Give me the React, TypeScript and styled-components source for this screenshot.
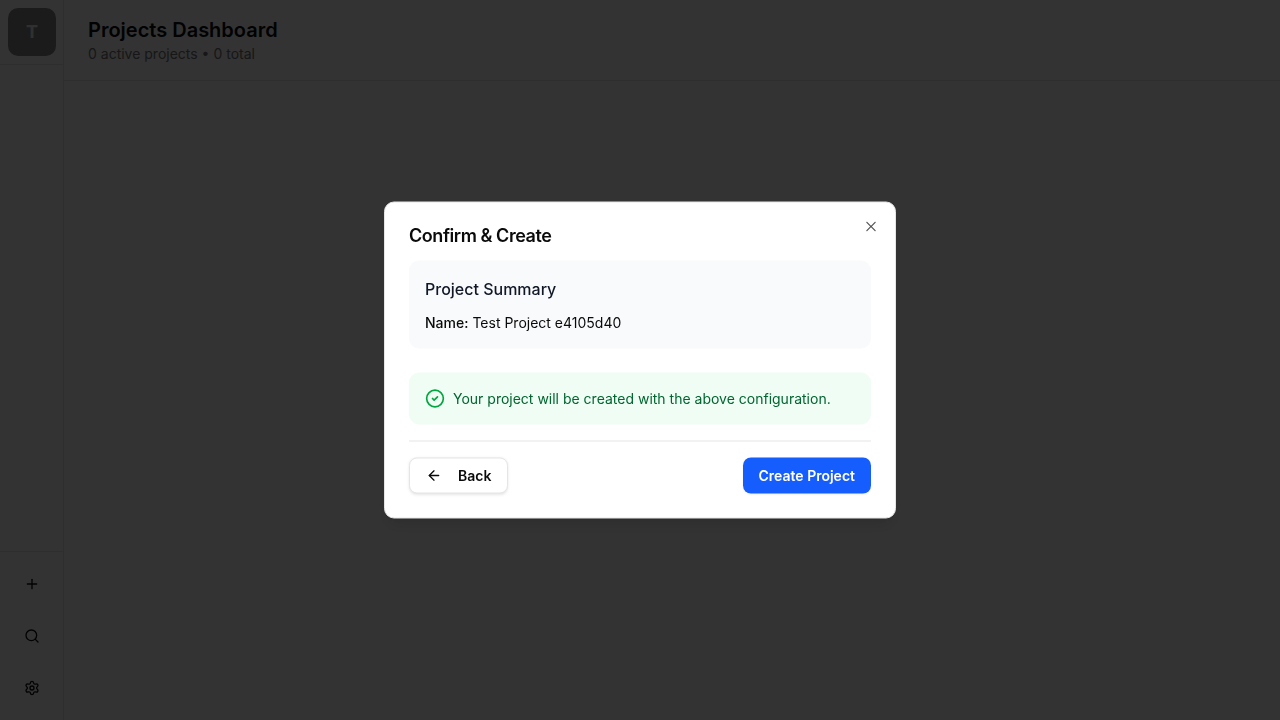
import React from "react";
import styled, { createGlobalStyle, css } from "styled-components";
import { ArrowLeft, CircleCheck, Plus, Search, Settings } from "lucide-react";

const GlobalStyle = createGlobalStyle`
  *, *::before, *::after { box-sizing: border-box; }
  body {
    margin: 0;
    background: #ffffff;
    color: #0a0a0a;
    font-family: Inter, "Liberation Sans", sans-serif;
    font-size: 14px;
    line-height: 20px;
  }
  h1, h2, h3, p { margin: 0; }
  button { font: inherit; color: inherit; cursor: pointer; }
`;

const Shell = styled.div`
  display: flex;
  min-height: 100vh;
`;

const Sidebar = styled.nav`
  display: flex;
  flex-direction: column;
  justify-content: space-between;
  width: 64px;
  flex-shrink: 0;
  border-right: 1px solid #e5e5e5;
`;

const SidebarTop = styled.div`
  padding: 8px 7px 8px 8px;
  border-bottom: 1px solid #e5e5e5;
`;

const Workspace = styled.button`
  display: flex;
  align-items: center;
  justify-content: center;
  width: 48px;
  height: 48px;
  padding: 0;
  border: 0;
  border-radius: 10px;
  background: #878787;
  color: #f0f0f0;
  font-size: 18px;
  line-height: 28px;
  font-weight: 700;
`;

const SidebarActions = styled.div`
  display: flex;
  flex-direction: column;
  gap: 4px;
  padding: 8px 7px 8px 8px;
  border-top: 1px solid #e5e5e5;
`;

const SidebarButton = styled.button`
  display: flex;
  align-items: center;
  justify-content: center;
  width: 48px;
  height: 48px;
  padding: 0;
  border: 0;
  border-radius: 8px;
  background: transparent;
`;

const Main = styled.main`
  flex: 1;
  min-width: 0;
`;

const PageHeader = styled.header`
  padding: 16px 24px;
  border-bottom: 1px solid #e5e5e5;
`;

const PageTitle = styled.h1`
  font-size: 20px;
  line-height: 28px;
  font-weight: 600;
`;

const PageMeta = styled.p`
  color: #737373;
`;

const Overlay = styled.div`
  position: fixed;
  inset: 0;
  background: rgba(0, 0, 0, 0.8);
`;

const Dialog = styled.section`
  position: fixed;
  top: 50%;
  left: 50%;
  transform: translate(-50%, -50%);
  display: flex;
  flex-direction: column;
  gap: 16px;
  width: 100%;
  max-width: 512px;
  padding: 24px;
  border: 1px solid #e5e5e5;
  border-radius: 10px;
  background: #ffffff;
  box-shadow: 0 10px 15px -3px rgba(0, 0, 0, 0.1), 0 4px 6px -4px rgba(0, 0, 0, 0.1);
`;

const DialogTitle = styled.h2`
  font-size: 18px;
  line-height: 18px;
  font-weight: 600;
  letter-spacing: -0.025em;
`;

const CloseButton = styled.button`
  position: absolute;
  top: 16px;
  right: 16px;
  display: flex;
  padding: 0;
  border: 0;
  border-radius: 2px;
  background: transparent;
  opacity: 0.7;
`;

const DialogBody = styled.div`
  display: flex;
  flex-direction: column;
  gap: 24px;
`;

const Summary = styled.div`
  display: flex;
  flex-direction: column;
  gap: 12px;
  padding: 16px;
  border-radius: 10px;
  background: #f9fafb;
`;

const SummaryTitle = styled.h3`
  font-size: 16px;
  line-height: 24px;
  font-weight: 500;
  color: #101828;
`;

const SummaryLabel = styled.span`
  font-weight: 500;
`;

const Notice = styled.div`
  display: flex;
  align-items: center;
  gap: 8px;
  padding: 16px;
  border-radius: 10px;
  background: #f0fdf4;
  color: #016630;

  svg { color: #00a63e; flex-shrink: 0; }
`;

const DialogFooter = styled.footer`
  display: flex;
  justify-content: space-between;
  padding-top: 16px;
  border-top: 1px solid #e5e5e5;
`;

const Button = styled.button<{ $variant: "primary" | "outline" }>`
  display: inline-flex;
  align-items: center;
  gap: 16px;
  height: 36px;
  padding: 0 16px;
  border-radius: 8px;
  font-weight: 600;
  white-space: nowrap;
  ${({ $variant }) =>
    $variant === "primary"
      ? css`
          border: 0;
          background: #155dfc;
          color: #ffffff;
          box-shadow: 0 1px 2px rgba(0, 0, 0, 0.05);
        `
      : css`
          border: 1px solid #e5e5e5;
          background: #ffffff;
          box-shadow: 0 1px 3px rgba(0, 0, 0, 0.1);
        `}
`;

function CrossIcon() {
  return (
    <svg width="16" height="16" viewBox="0 0 15 15" fill="none" aria-hidden="true">
      <path
        d="M11.7816 4.03157C12.0062 3.80702 12.0062 3.44295 11.7816 3.2184C11.5571 2.99385 11.193 2.99385 10.9685 3.2184L7.50005 6.68682L4.03164 3.2184C3.80708 2.99385 3.44301 2.99385 3.21846 3.2184C2.99391 3.44295 2.99391 3.80702 3.21846 4.03157L6.68688 7.49999L3.21846 10.9684C2.99391 11.193 2.99391 11.5571 3.21846 11.7816C3.44301 12.0062 3.80708 12.0062 4.03164 11.7816L7.50005 8.31316L10.9685 11.7816C11.193 12.0062 11.5571 12.0062 11.7816 11.7816C12.0062 11.5571 12.0062 11.193 11.7816 10.9684L8.31322 7.49999L11.7816 4.03157Z"
        fill="currentColor"
        fillRule="evenodd"
        clipRule="evenodd"
      />
    </svg>
  );
}

export default function App() {
  return (
    <>
      <GlobalStyle />
      <Shell>
        <Sidebar aria-label="Workspace">
          <SidebarTop>
            <Workspace type="button">T</Workspace>
          </SidebarTop>
          <SidebarActions>
            <SidebarButton type="button" aria-label="New project">
              <Plus size={16} />
            </SidebarButton>
            <SidebarButton type="button" aria-label="Search">
              <Search size={16} />
            </SidebarButton>
            <SidebarButton type="button" aria-label="Settings">
              <Settings size={16} />
            </SidebarButton>
          </SidebarActions>
        </Sidebar>
        <Main>
          <PageHeader>
            <PageTitle>Projects Dashboard</PageTitle>
            <PageMeta>0 active projects • 0 total</PageMeta>
          </PageHeader>
        </Main>
      </Shell>
      <Overlay />
      <Dialog role="dialog" aria-modal="true" aria-labelledby="confirm-title">
        <DialogTitle id="confirm-title">Confirm &amp; Create</DialogTitle>
        <DialogBody>
          <Summary>
            <SummaryTitle>Project Summary</SummaryTitle>
            <p>
              <SummaryLabel>Name:</SummaryLabel> Test Project e4105d40
            </p>
          </Summary>
          <Notice>
            <CircleCheck size={20} />
            <p>Your project will be created with the above configuration.</p>
          </Notice>
        </DialogBody>
        <DialogFooter>
          <Button type="button" $variant="outline">
            <ArrowLeft size={16} />
            Back
          </Button>
          <Button type="button" $variant="primary">
            Create Project
          </Button>
        </DialogFooter>
        <CloseButton type="button" aria-label="Close">
          <CrossIcon />
        </CloseButton>
      </Dialog>
    </>
  );
}
